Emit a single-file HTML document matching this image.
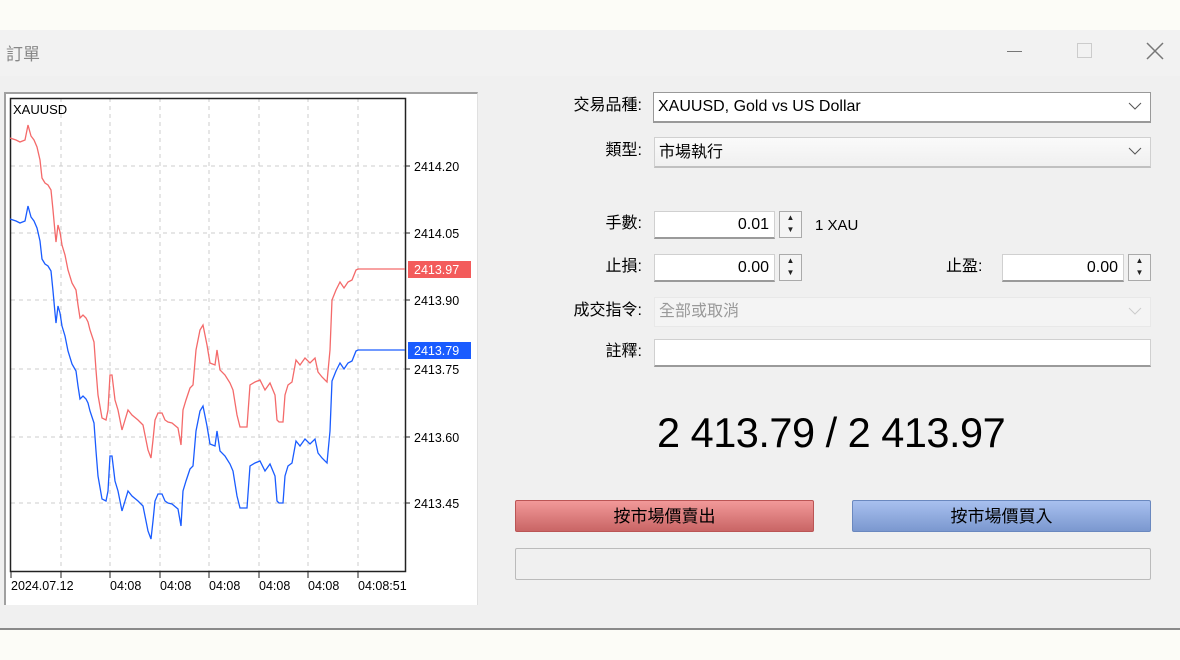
<!DOCTYPE html>
<html><head><meta charset="utf-8"><style>
*{margin:0;padding:0;box-sizing:border-box}
body{width:1180px;height:660px;background:#fcfcf7;position:relative;overflow:hidden;font-family:"Liberation Sans","Noto Sans CJK TC",sans-serif;color:#000}
.a{position:absolute}
.win{left:0;top:30px;width:1180px;height:600px;background:#f0f0f0;border-bottom:2px solid #8a8a8a}
.tb{left:0;top:30px;width:1180px;height:46px;background:#f2f2f2}
.lbl{font-size:16px;text-align:right;width:140px;left:502px;line-height:20px;height:20px}
.box{background:#fff;border:1px solid #d0d0d0;border-bottom:2px solid #9a9a9a}
.inp{font-size:16px;text-align:right;padding-right:5px;line-height:26px}
.spin{width:23px;height:27px;background:#f4f4f4;border:1px solid #aaa;font-size:8px;text-align:center;line-height:12px;color:#222}
.combo{font-size:16px;line-height:28px;padding-left:4px}
.chev{position:absolute;right:8px;top:6px}
.btn{height:32px;font-size:17px;text-align:center;line-height:31px;border-radius:2px}
</style></head><body>
<div class="a win"></div>
<div class="a tb"></div>
<div class="a" style="left:6px;top:40px;font-size:17px;color:#888">訂單</div>
<div class="a" style="left:1007px;top:51px;width:15px;height:1px;background:#777"></div>
<div class="a" style="left:1077px;top:43px;width:15px;height:15px;border:1px solid #ccc"></div>
<svg class="a" style="left:1146px;top:42px" width="18" height="18"><path d="M1 1L17 17M17 1L1 17" stroke="#777" stroke-width="1.5"/></svg>

<div class="a" style="left:4px;top:92px;width:474px;height:513px;background:#fff;border-top:2px solid #a0a0a0;border-left:2px solid #a0a0a0;border-right:1px solid #e0e0e0"></div>
<svg class="a" style="left:0;top:0" width="480" height="610" font-family="Liberation Sans, sans-serif" font-size="13">
<defs><polyline id="p" fill="none" points="10,138 16,140 20,142 25,140 28,125 31,136 34,140 37,147 40,160 42,178 45,183 48,185 51,190 53,210 55,232 56,242 58,225 60,232 62,245 65,255 68,270 72,283 76,290 78,305 80,318 83,315 86,318 88,322 90,330 94,342 96,370 98,395 102,418 106,420 108,410 110,375 112,375 115,400 118,410 122,430 125,420 128,410 132,415 138,420 143,425 146,440 148,450 151,458 153,440 155,420 158,413 162,413 165,420 168,422 172,423 178,428 181,445 183,410 186,400 190,388 193,385 196,350 200,330 203,325 207,345 210,363 215,365 217,350 220,370 225,375 230,383 233,390 237,415 240,427 247,427 250,385 255,382 260,380 265,390 270,383 275,395 277,420 279,422 283,422 285,395 288,385 292,382 296,360 300,365 305,358 310,363 315,358 318,372 322,377 327,382 330,350 332,300 336,290 340,282 344,288 348,282 352,280 356,270 358,269 405,269"/></defs>
<g stroke="#ccc" stroke-dasharray="4,4" stroke-width="1">
<path d="M61 98V571M110 98V571M160 98V571M209 98V571M259 98V571M308 98V571M358 98V571"/>
<path d="M11 166H405M11 233H405M11 300H405M11 369H405M11 437H405M11 503H405"/>
</g>
<rect x="10.5" y="98.5" width="395" height="473" fill="none" stroke="#222" stroke-width="1.5"/>
<path d="M11 571V578M61 571V578M110 571V578M160 571V578M209 571V578M259 571V578M308 571V578M358 571V578M406 166h4M406 233h4M406 300h4M406 369h4M406 437h4M406 503h4" stroke="#222"/>
<use href="#p" stroke="#f46a6a" stroke-width="1.3"/>
<use href="#p" transform="translate(0,81)" stroke="#1a5cff" stroke-width="1.3"/>
<text x="13" y="114" font-size="13">XAUUSD</text>
<g font-size="12.5"><text x="414" y="171">2414.20</text><text x="414" y="238">2414.05</text><text x="414" y="305">2413.90</text><text x="414" y="374">2413.75</text><text x="414" y="442">2413.60</text><text x="414" y="508">2413.45</text></g>
<rect x="408" y="261" width="63" height="17" fill="#f35b5b"/><text x="414" y="274" fill="#fff" font-size="12.5">2413.97</text>
<rect x="408" y="342" width="63" height="17" fill="#1a5cff"/><text x="414" y="355" fill="#fff" font-size="12.5">2413.79</text>
<g font-size="12.5"><text x="11" y="590">2024.07.12</text><text x="110" y="590">04:08</text><text x="160" y="590">04:08</text><text x="209" y="590">04:08</text><text x="259" y="590">04:08</text><text x="308" y="590">04:08</text><text x="358" y="590">04:08:51</text></g>
</svg>

<div class="a lbl" style="top:96px">交易品種:</div>
<div class="a box combo" style="left:653px;top:92px;width:498px;height:31px;border:1px solid #999;border-bottom:2px solid #999">XAUUSD, Gold vs US Dollar<svg class="chev" width="14" height="14"><path d="M1 4l6 6 6-6" stroke="#555" fill="none"/></svg></div>
<div class="a lbl" style="top:141px">類型:</div>
<div class="a box combo" style="left:654px;top:137px;width:497px;height:31px;background:linear-gradient(#fafafa,#f0f0f0);border:1px solid #d0d0d0;border-bottom:2px solid #c0c0c0;line-height:30px">市場執行<svg class="chev" width="14" height="14"><path d="M1 4l6 6 6-6" stroke="#555" fill="none"/></svg></div>

<div class="a lbl" style="top:214px">手數:</div>
<div class="a box inp" style="left:654px;top:211px;width:121px;height:28px">0.01</div>
<div class="a spin" style="left:779px;top:211px">▲<br>▼</div>
<div class="a" style="left:815px;top:217px;font-size:15px">1 XAU</div>

<div class="a lbl" style="top:257px">止損:</div>
<div class="a box inp" style="left:654px;top:254px;width:121px;height:28px">0.00</div>
<div class="a spin" style="left:779px;top:254px">▲<br>▼</div>
<div class="a" style="left:946px;top:257px;font-size:16px;line-height:20px">止盈:</div>
<div class="a box inp" style="left:1002px;top:254px;width:122px;height:28px">0.00</div>
<div class="a spin" style="left:1128px;top:254px">▲<br>▼</div>

<div class="a lbl" style="top:301px">成交指令:</div>
<div class="a combo" style="left:654px;top:297px;width:497px;height:30px;background:#f4f4f4;border:1px solid #e8e8e8;color:#999">全部或取消<svg class="chev" width="14" height="14"><path d="M1 4l6 6 6-6" stroke="#ccc" fill="none"/></svg></div>
<div class="a lbl" style="top:342px">註釋:</div>
<div class="a box" style="left:654px;top:339px;width:497px;height:28px"></div>

<div class="a" style="left:657px;top:409px;font-size:41.5px;letter-spacing:-0.5px">2 413.79 / 2 413.97</div>

<div class="a btn" style="left:515px;top:500px;width:299px;background:linear-gradient(#f29999,#c96565);border:1px solid #b55">按市場價賣出</div>
<div class="a btn" style="left:852px;top:500px;width:299px;background:linear-gradient(#a8c0ef,#7b98cf);border:1px solid #6a88bf">按市場價買入</div>
<div class="a" style="left:515px;top:548px;width:636px;height:32px;background:#f0f0f0;border:1px solid #bbb;border-radius:2px"></div>
</body></html>
